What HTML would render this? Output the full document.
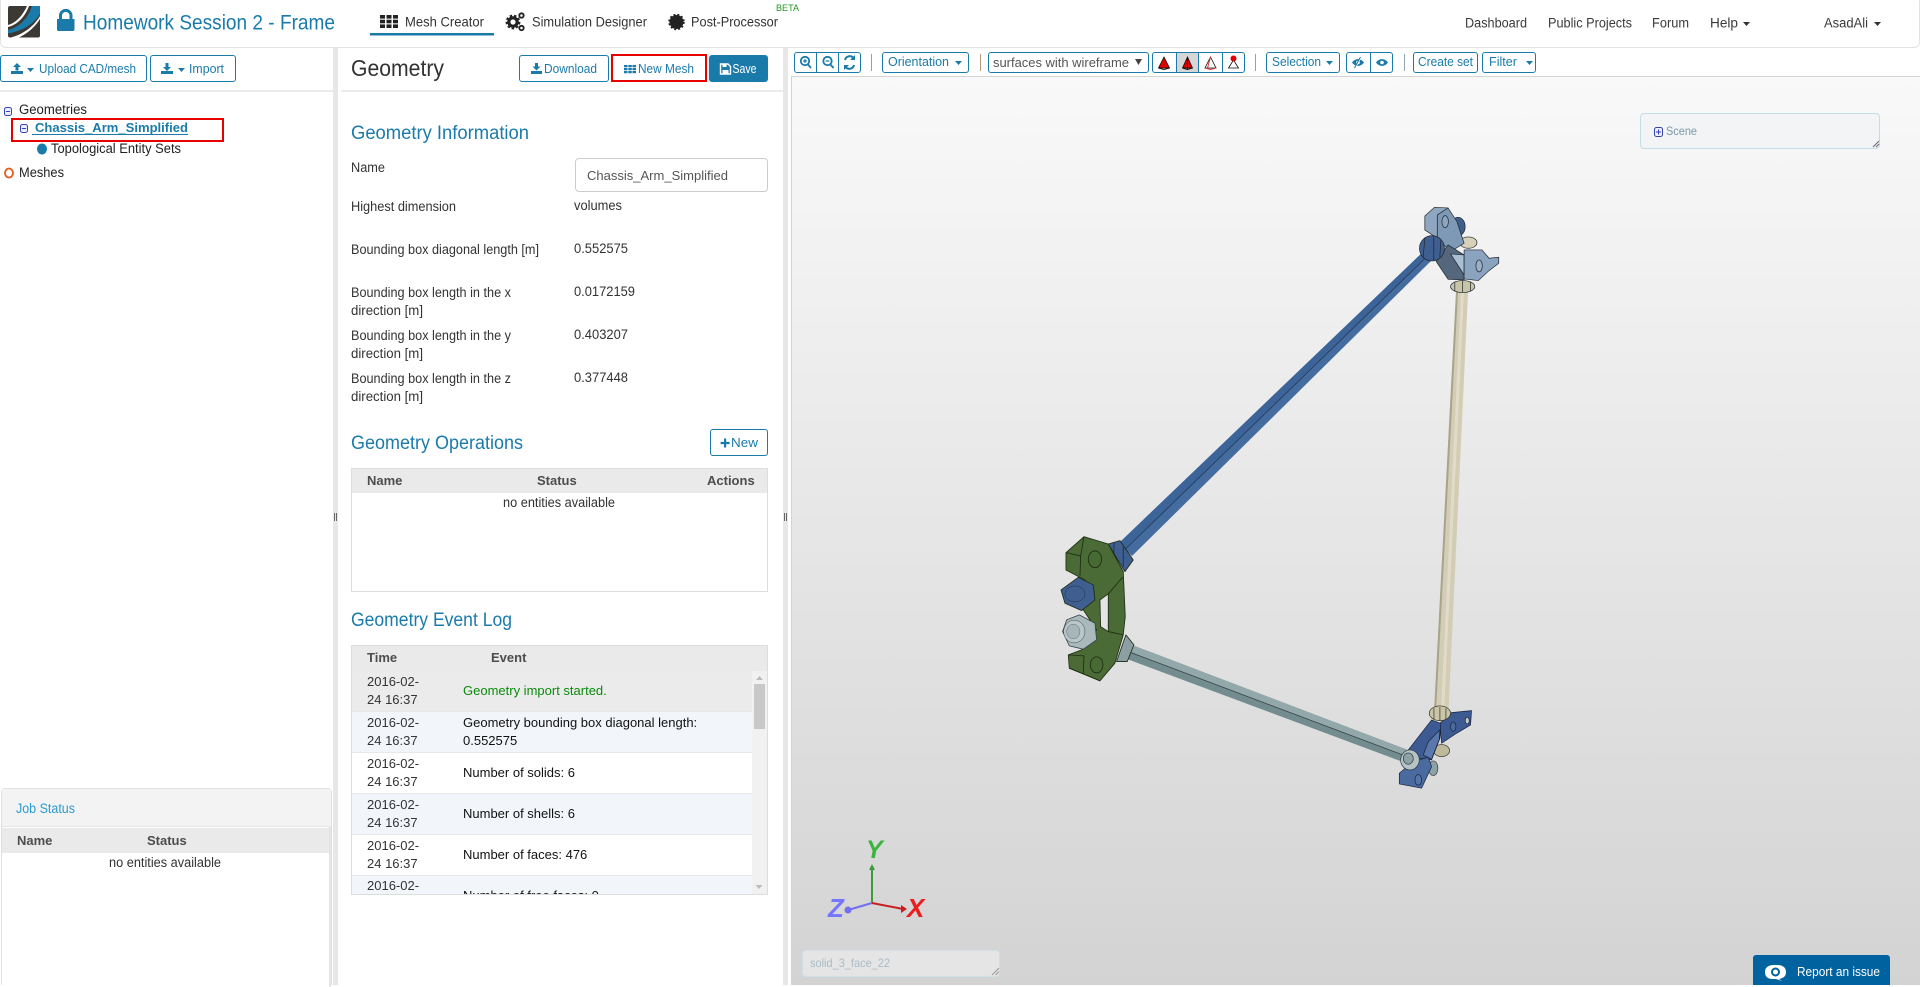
<!DOCTYPE html>
<html><head><meta charset="utf-8"><title>Homework Session 2 - Frame</title>
<style>
html,body{margin:0;padding:0;width:1920px;height:985px;overflow:hidden;background:#fff;font-family:"Liberation Sans",sans-serif}
.a{position:absolute;box-sizing:border-box}
.btn{position:absolute;box-sizing:border-box;border:1px solid #1a7bab;border-radius:3px;background:#fff}
.th{position:absolute;font-size:13px;font-weight:bold;color:#4d4d4d;line-height:18px;white-space:nowrap}
.row{position:absolute;left:0;width:401px;box-sizing:border-box;border-bottom:1px solid #e8e8e8}
.d{position:absolute;left:15px;font-size:13px;line-height:18px;color:#333;white-space:nowrap}
.e{position:absolute;left:111px;font-size:13px;line-height:18px;color:#111;white-space:nowrap}
svg text{font-family:"Liberation Sans",sans-serif}
</style></head><body>

<!-- header -->
<div class="a" style="left:0;top:-4px;width:1920px;height:52px;border:1px solid #e2e2e2;border-radius:6px;background:#fff"></div>
<!-- gutters -->
<div class="a" style="left:333px;top:48px;width:5px;height:937px;background:#e7e7e7"></div>
<div class="a" style="left:783px;top:48px;width:5px;height:937px;background:#e7e7e7"></div>
<div class="a" style="left:0;top:90px;width:333px;height:2px;background:#ececec"></div>
<div class="a" style="left:341px;top:90px;width:442px;height:2px;background:#ececec"></div>

<!-- viewer -->
<div class="a" style="left:791px;top:76px;width:1129px;height:909px;border-top:1px solid #d4d4d4;border-left:1px solid #d4d4d4;background:linear-gradient(#f9f9f9,#d3d3d3)"></div>
<div class="a" style="left:1640px;top:113px;width:240px;height:36px;border:1px solid #c3dde8;border-radius:4px;background:rgba(240,243,244,.75)"></div>
<div class="a" style="left:802px;top:950px;width:198px;height:27px;border:1px solid #cfdfe6;border-radius:4px;background:rgba(232,232,232,.8)"></div>
<div class="a" style="left:1753px;top:955px;width:137px;height:30px;background:#00629f;border-radius:3px 3px 0 0"></div>

<!-- left panel buttons -->
<div class="btn" style="left:0;top:55px;width:147px;height:27px"></div>
<div class="btn" style="left:150px;top:55px;width:86px;height:27px"></div>
<!-- middle panel buttons -->
<div class="btn" style="left:519px;top:55px;width:90px;height:27px"></div>
<div class="btn" style="left:611px;top:54px;width:96px;height:28px;border:2px solid #e60000;border-radius:0"></div>
<div class="a" style="left:709px;top:55px;width:59px;height:27px;background:#1a7bab;border-radius:3px"></div>
<div class="btn" style="left:710px;top:429px;width:58px;height:27px"></div>
<!-- red box tree -->
<div class="a" style="left:11px;top:118px;width:213px;height:24px;border:2px solid #e60000"></div>
<!-- input -->
<div class="a" style="left:575px;top:158px;width:193px;height:34px;border:1px solid #ccc;border-radius:4px;background:#fff"></div>

<!-- operations table -->
<div class="a" style="left:351px;top:468px;width:417px;height:124px;border:1px solid #ddd;background:#fff">
  <div class="a" style="left:0;top:0;width:415px;height:24px;background:#eaeaea"></div>
  <div class="th" style="left:15px;top:3px">Name</div>
  <div class="th" style="left:185px;top:3px">Status</div>
  <div class="th" style="left:355px;top:3px">Actions</div>
</div>

<!-- event log table -->
<div class="a" style="left:351px;top:645px;width:417px;height:250px;border:1px solid #ddd;background:#fff;overflow:hidden">
  <div class="a" style="left:0;top:0;width:415px;height:25px;background:#eaeaea"></div>
  <div class="th" style="left:15px;top:3px">Time</div>
  <div class="th" style="left:139px;top:3px">Event</div>
  <div class="row" style="top:25px;height:41px;background:#ebebeb"><div class="d" style="top:2px">2016-02-<br>24 16:37</div><div class="e" style="top:11px;color:#0a8a0a">Geometry import started.</div></div>
  <div class="row" style="top:66px;height:41px;background:#f2f6fb"><div class="d" style="top:2px">2016-02-<br>24 16:37</div><div class="e" style="top:2px">Geometry bounding box diagonal length:<br>0.552575</div></div>
  <div class="row" style="top:107px;height:41px;background:#fff"><div class="d" style="top:2px">2016-02-<br>24 16:37</div><div class="e" style="top:11px">Number of solids: 6</div></div>
  <div class="row" style="top:148px;height:41px;background:#f2f6fb"><div class="d" style="top:2px">2016-02-<br>24 16:37</div><div class="e" style="top:11px">Number of shells: 6</div></div>
  <div class="row" style="top:189px;height:41px;background:#fff"><div class="d" style="top:2px">2016-02-<br>24 16:37</div><div class="e" style="top:11px">Number of faces: 476</div></div>
  <div class="row" style="top:230px;height:41px;background:#f2f6fb"><div class="d" style="top:1px">2016-02-<br>24 16:37</div><div class="e" style="top:11px">Number of free faces: 0</div></div>
  <div class="a" style="left:400px;top:25px;width:15px;height:225px;background:#f1f1f1"></div>
  <div class="a" style="left:402px;top:38px;width:11px;height:45px;background:#c8c8c8"></div>
</div>

<!-- job status -->
<div class="a" style="left:1px;top:788px;width:331px;height:197px;border:1px solid #e0e0e0;border-bottom:0;border-radius:4px 4px 0 0;background:#fff">
  <div class="a" style="left:0;top:0;width:329px;height:38px;background:#f3f3f3;border-bottom:1px solid #e4e4e4"></div>
  <div class="a" style="left:0;top:39px;width:328px;height:25px;background:#eaeaea"></div>
  <div class="th" style="left:15px;top:43px">Name</div>
  <div class="th" style="left:145px;top:43px">Status</div>
  <div class="a" style="left:327px;top:38px;width:2px;height:160px;background:#e4e4e4"></div>
</div>

<!-- toolbar boxes -->
<div class="btn" style="left:794px;top:52px;width:67px;height:21px"></div>
<div class="a" style="left:816px;top:52px;width:1px;height:21px;background:#1a7bab"></div>
<div class="a" style="left:838px;top:52px;width:1px;height:21px;background:#1a7bab"></div>
<div class="btn" style="left:882px;top:52px;width:87px;height:21px"></div>
<div class="btn" style="left:988px;top:52px;width:161px;height:21px"></div>
<div class="btn" style="left:1152px;top:52px;width:93px;height:21px"></div>
<div class="a" style="left:1176px;top:53px;width:23px;height:19px;background:#d6d6d6;border-left:1px solid #1a7bab;border-right:1px solid #1a7bab"></div>
<div class="a" style="left:1222px;top:52px;width:1px;height:21px;background:#1a7bab"></div>
<div class="btn" style="left:1266px;top:52px;width:74px;height:21px"></div>
<div class="btn" style="left:1346px;top:52px;width:47px;height:21px"></div>
<div class="a" style="left:1370px;top:52px;width:1px;height:21px;background:#1a7bab"></div>
<div class="btn" style="left:1413px;top:52px;width:65px;height:21px"></div>
<div class="btn" style="left:1482px;top:52px;width:54px;height:21px"></div>
<div class="a" style="left:871px;top:54px;width:1px;height:17px;background:#b89a78"></div>
<div class="a" style="left:980px;top:54px;width:1px;height:17px;background:#b89a78"></div>
<div class="a" style="left:1255px;top:54px;width:1px;height:17px;background:#b89a78"></div>
<div class="a" style="left:1404px;top:54px;width:1px;height:17px;background:#8fa5b5"></div>

<svg class="a" style="left:0;top:0" width="1920" height="985" viewBox="0 0 1920 985" xmlns="http://www.w3.org/2000/svg">
<!-- logo -->
<rect x="8" y="6" width="32" height="31.500" rx="2" fill="#3c3935"/>
<path d="M8 30 C20 27 28 18 32 6 L40 6 L40 14 C34 24 22 31 8 33.500Z" fill="#1a7bab"/>
<path d="M8 25 C16 23 23 15 27 6 L29 6 C25 17 17 25 8 27Z" fill="#fff"/>
<path d="M11 37.500 C24 34 34 26 40 16 L40 19 C35 27 28 33 19 37.500Z" fill="#fff"/>
<!-- lock -->
<path d="M57 19h17.500v10.500a1.500 1.500 0 0 1-1.500 1.500H58.500a1.500 1.500 0 0 1-1.500-1.500Z" fill="#1a7bab"/>
<path d="M60.500 19v-4a5.300 5.300 0 0 1 10.500 0v4" fill="none" stroke="#1a7bab" stroke-width="3"/>
<!-- mesh icon -->
<g fill="#222"><rect x="380" y="15" width="5" height="3.600"/><rect x="386.500" y="15" width="5" height="3.600"/><rect x="393" y="15" width="5" height="3.600"/><rect x="380" y="19.700" width="5" height="3.600"/><rect x="386.500" y="19.700" width="5" height="3.600"/><rect x="393" y="19.700" width="5" height="3.600"/><rect x="380" y="24.400" width="5" height="3.600"/><rect x="386.500" y="24.400" width="5" height="3.600"/><rect x="393" y="24.400" width="5" height="3.600"/></g>
<rect x="370" y="33" width="124" height="2.500" fill="#1a7bab"/>
<!-- sim gears -->
<circle cx="513" cy="22" r="4.200" fill="none" stroke="#222" stroke-width="3.200"/><circle cx="513" cy="22" r="6.500" fill="none" stroke="#222" stroke-width="1.800" stroke-dasharray="2.500 2"/>
<circle cx="521.500" cy="15.500" r="2.200" fill="none" stroke="#222" stroke-width="1.800"/><circle cx="521.500" cy="28" r="2.200" fill="none" stroke="#222" stroke-width="1.800"/>
<!-- post icon -->
<circle cx="676.500" cy="22" r="7" fill="#222"/><circle cx="676.500" cy="22" r="7.500" fill="none" stroke="#222" stroke-width="1.500" stroke-dasharray="2 2"/>

<!-- header text -->
<text x="83" y="29.500" font-size="21" fill="#1a7bab" textLength="252" lengthAdjust="spacingAndGlyphs">Homework Session 2 - Frame</text>
<g font-size="14" fill="#333">
<text x="405" y="26.500" textLength="79" lengthAdjust="spacingAndGlyphs">Mesh Creator</text>
<text x="532" y="26.500" textLength="115" lengthAdjust="spacingAndGlyphs">Simulation Designer</text>
<text x="691" y="26.500" textLength="87" lengthAdjust="spacingAndGlyphs">Post-Processor</text>
</g>
<text x="776" y="11" font-size="9" fill="#1f9a1f" textLength="23" lengthAdjust="spacingAndGlyphs">BETA</text>
<g font-size="13.500" fill="#3a3a3a">
<text x="1465" y="27.500" textLength="62" lengthAdjust="spacingAndGlyphs">Dashboard</text>
<text x="1548" y="27.500" textLength="84" lengthAdjust="spacingAndGlyphs">Public Projects</text>
<text x="1652" y="27.500" textLength="37" lengthAdjust="spacingAndGlyphs">Forum</text>
<text x="1710" y="27.500" textLength="28" lengthAdjust="spacingAndGlyphs">Help</text>
<text x="1824" y="27.500" textLength="44" lengthAdjust="spacingAndGlyphs">AsadAli</text>
</g>
<path d="M1743 22h7l-3.500 4zM1874 22h7l-3.500 4z" fill="#333"/>

<!-- left buttons -->
<g fill="#1a7bab">
<path d="M17 63l4 4h-2.500v3.500h-3V67H13zM11 71h12v3H11z"/><path d="M27 68h7l-3.500 4z"/>
<path d="M165.500 63h3v4h2.500l-4 4-4-4h2.500zM161 71h12v3h-12z"/><path d="M178 68h7l-3.500 4z"/>
<path d="M535 63h3v3.500h2.500l-4 4-4-4h2.500zM531 71h11v3h-11z"/>
<path d="M624 65h3.500v2.300H624zM628.300 65h3.500v2.300h-3.500zM632.500 65h3.500v2.300h-3.500zM624 68h3.500v2.300H624zM628.300 68h3.500v2.300h-3.500zM632.500 68h3.500v2.300h-3.500zM624 71h3.500v2.300H624zM628.300 71h3.500v2.300h-3.500zM632.500 71h3.500v2.300h-3.500z"/>
<path d="M724 438.500h2.200v3.400h3.400v2.200h-3.400v3.400H724v-3.400h-3.400v-2.200h3.400z"/>
<text x="39" y="73" font-size="12.500" textLength="97" lengthAdjust="spacingAndGlyphs">Upload CAD/mesh</text>
<text x="189" y="73" font-size="12.500" textLength="35" lengthAdjust="spacingAndGlyphs">Import</text>
<text x="544" y="73" font-size="12.500" textLength="53" lengthAdjust="spacingAndGlyphs">Download</text>
<text x="638" y="73" font-size="12.500" textLength="56" lengthAdjust="spacingAndGlyphs">New Mesh</text>
<text x="731" y="447" font-size="12.500" textLength="27" lengthAdjust="spacingAndGlyphs">New</text>
</g>
<path d="M720.500 64h7.500l2.500 2.500V74h-10z" fill="none" stroke="#fff" stroke-width="1.400"/><rect x="722.500" y="64.500" width="4" height="2.500" fill="#fff"/><rect x="722.500" y="70" width="6" height="3.500" fill="#fff"/>
<text x="732.500" y="73" font-size="12.500" fill="#fff" textLength="24" lengthAdjust="spacingAndGlyphs">Save</text>
<text x="351" y="76" font-size="23" fill="#333" textLength="93" lengthAdjust="spacingAndGlyphs">Geometry</text>

<!-- tree -->
<rect x="4.500" y="107.500" width="7" height="8" rx="2" fill="#eef" stroke="#3344aa"/><path d="M6 111.500h4" stroke="#3344aa"/>
<rect x="20.500" y="124.500" width="7" height="8" rx="2" fill="#eef" stroke="#3344aa"/><path d="M22 128.500h4" stroke="#3344aa"/>
<text x="19" y="114" font-size="13.500" fill="#222" textLength="68" lengthAdjust="spacingAndGlyphs">Geometries</text>
<text x="35" y="132" font-size="13" font-weight="bold" fill="#1a7bab" textLength="153" lengthAdjust="spacingAndGlyphs">Chassis_Arm_Simplified</text>
<rect x="32" y="134" width="156" height="1" fill="#1a7bab"/>
<ellipse cx="42" cy="149" rx="5" ry="5.500" fill="#1a7bab"/>
<text x="51" y="153" font-size="13.500" fill="#222" textLength="130" lengthAdjust="spacingAndGlyphs">Topological Entity Sets</text>
<ellipse cx="9" cy="173" rx="4" ry="4.500" fill="none" stroke="#e25a1c" stroke-width="1.800"/>
<text x="19" y="177" font-size="13.500" fill="#222" textLength="45" lengthAdjust="spacingAndGlyphs">Meshes</text>

<!-- geometry info -->
<g font-size="19" fill="#1a7bab">
<text x="351" y="139" textLength="178" lengthAdjust="spacingAndGlyphs">Geometry Information</text>
<text x="351" y="449" textLength="172" lengthAdjust="spacingAndGlyphs">Geometry Operations</text>
<text x="351" y="626" textLength="161" lengthAdjust="spacingAndGlyphs">Geometry Event Log</text>
</g>
<text x="587" y="180" font-size="13" fill="#555" textLength="141" lengthAdjust="spacingAndGlyphs">Chassis_Arm_Simplified</text>
<g font-size="13.500" fill="#333">
<text x="351" y="172" textLength="34" lengthAdjust="spacingAndGlyphs">Name</text>
<text x="351" y="211" textLength="105" lengthAdjust="spacingAndGlyphs">Highest dimension</text>
<text x="351" y="254" textLength="188" lengthAdjust="spacingAndGlyphs">Bounding box diagonal length [m]</text>
<text x="351" y="297" textLength="160" lengthAdjust="spacingAndGlyphs">Bounding box length in the x</text>
<text x="351" y="315" textLength="72" lengthAdjust="spacingAndGlyphs">direction [m]</text>
<text x="351" y="340" textLength="160" lengthAdjust="spacingAndGlyphs">Bounding box length in the y</text>
<text x="351" y="358" textLength="72" lengthAdjust="spacingAndGlyphs">direction [m]</text>
<text x="351" y="383" textLength="160" lengthAdjust="spacingAndGlyphs">Bounding box length in the z</text>
<text x="351" y="401" textLength="72" lengthAdjust="spacingAndGlyphs">direction [m]</text>
<text x="574" y="210" textLength="48" lengthAdjust="spacingAndGlyphs">volumes</text>
<text x="574" y="253" textLength="54" lengthAdjust="spacingAndGlyphs">0.552575</text>
<text x="574" y="296" textLength="61" lengthAdjust="spacingAndGlyphs">0.0172159</text>
<text x="574" y="339" textLength="54" lengthAdjust="spacingAndGlyphs">0.403207</text>
<text x="574" y="382" textLength="54" lengthAdjust="spacingAndGlyphs">0.377448</text>
<text x="503" y="507" textLength="112" lengthAdjust="spacingAndGlyphs">no entities available</text>
<text x="109" y="867" textLength="112" lengthAdjust="spacingAndGlyphs">no entities available</text>
</g>
<text x="16" y="813" font-size="13.500" fill="#2b9bcf" textLength="59" lengthAdjust="spacingAndGlyphs">Job Status</text>
<!-- scrollbar arrows -->
<path d="M756 680l3.500-4 3.500 4zM755.500 885h7l-3.500 4z" fill="#bbb"/>

<!-- gutter grips -->
<g fill="#666"><rect x="334" y="513" width="1" height="8"/><rect x="336" y="513" width="1" height="8"/><rect x="784" y="513" width="1" height="8"/><rect x="786" y="513" width="1" height="8"/></g>

<!-- toolbar icons -->
<g fill="none" stroke="#1a7bab" stroke-width="1.800">
<circle cx="805" cy="61" r="4.200"/><path d="M808 64.500l3 3.500"/><path d="M803 61h4M805 59v4" stroke-width="1.200"/>
<circle cx="827.500" cy="61" r="4.200"/><path d="M830.500 64.500l3 3.500"/><path d="M825.500 61h4" stroke-width="1.200"/>
<path d="M845 60a4.800 4.800 0 0 1 8-2.500M854 65a4.800 4.800 0 0 1-8 2.500" stroke-width="2"/>
</g>
<path d="M855 55v5h-5zM844 70v-5h5z" fill="#1a7bab"/>
<g font-size="12.500" fill="#1a7bab">
<text x="888" y="66" textLength="61" lengthAdjust="spacingAndGlyphs">Orientation</text>
<text x="1272" y="66" textLength="49" lengthAdjust="spacingAndGlyphs">Selection</text>
<text x="1418" y="66" textLength="55" lengthAdjust="spacingAndGlyphs">Create set</text>
<text x="1489" y="66" textLength="28" lengthAdjust="spacingAndGlyphs">Filter</text>
</g>
<path d="M955 61h7l-3.500 4zM1326 61h7l-3.500 4zM1526 61h7l-3.500 4z" fill="#1a7bab"/>
<text x="993" y="67" font-size="13" fill="#555" textLength="136" lengthAdjust="spacingAndGlyphs">surfaces with wireframe</text>
<path d="M1135 59h7l-3.500 6z" fill="#444"/>
<!-- render-mode cones -->
<path d="M1164 57l5.500 11h-11z" fill="#e00000" stroke="#111" stroke-width=".8"/><path d="M1158.500 68l5.500 1.500 5.500-1.500" fill="none" stroke="#111"/>
<path d="M1187.500 57l5 11h-10z" fill="#d80000" stroke="#111" stroke-width=".8"/><path d="M1187.500 57v12.500M1182.500 68l5 1.500 5-1.500" fill="none" stroke="#111"/>
<path d="M1210.500 57l5.500 11h-11z" fill="#fff" stroke="#111" stroke-width=".8"/><path d="M1210.500 57l-3 11" stroke="#d33" fill="none"/><path d="M1205 68l5.500 1.500 5.500-1.500" fill="none" stroke="#d33"/>
<path d="M1233.500 60l5 8h-10z" fill="#fff" stroke="#111" stroke-width=".8"/><circle cx="1233.500" cy="58.500" r="3" fill="#e00000"/>
<!-- eye icons -->
<path d="M1352 62.500c3-4.500 9-4.500 12 0-3 4.500-9 4.500-12 0z" fill="#1a7bab"/><circle cx="1358" cy="62.500" r="1.800" fill="#fff"/><path d="M1355 68l6-11" stroke="#fff" stroke-width="1.500"/><path d="M1354.500 68l6-11" stroke="#1a7bab" stroke-width="1"/>
<path d="M1376 62.500c3-4.500 9-4.500 12 0-3 4.500-9 4.500-12 0z" fill="#1a7bab"/><circle cx="1382" cy="62.500" r="1.800" fill="#fff"/>
<!-- scene box -->
<rect x="1654.500" y="127.500" width="8" height="9" rx="2" fill="#eef" stroke="#3344aa"/><path d="M1656 132h5M1658.500 129.500v5" stroke="#3344aa"/>
<text x="1666" y="135" font-size="11.500" fill="#7a99aa" textLength="31" lengthAdjust="spacingAndGlyphs">Scene</text>
<path d="M1873 147l6-6M1876 147l3-3" stroke="#667" fill="none"/>
<text x="810" y="967" font-size="12" fill="#a9bcc7" textLength="80" lengthAdjust="spacingAndGlyphs">solid_3_face_22</text>
<path d="M992 975l7-7M995.500 975l3.500-3.500" stroke="#999" fill="none"/>
<!-- report -->
<path d="M1765 972c0-5 4-7 9-7h3c5 0 9 2 9 7s-3 6-7 7l3 2-6-2h-3c-5 0-8-2-8-7z" fill="#fff"/><circle cx="1775.500" cy="972" r="3.500" fill="none" stroke="#00629f" stroke-width="2"/>
<text x="1797" y="976" font-size="13" fill="#fff" textLength="83" lengthAdjust="spacingAndGlyphs">Report an issue</text>

<!-- axes -->
<path d="M872 903V870" stroke="#3a9d3a" stroke-width="2"/><path d="M872 864l-3 6h6z" fill="#3a9d3a"/>
<path d="M872 903L848 910" stroke="#7070f0" stroke-width="2"/><circle cx="848" cy="910" r="3.500" fill="#7070f0"/>
<path d="M872 903L903 909" stroke="#c81e1e" stroke-width="2"/><path d="M907 909l-6-4v8z" fill="#c81e1e"/>
<text x="866" y="858" font-size="25" font-weight="bold" font-style="italic" fill="#3db53d">Y</text>
<text x="828" y="917" font-size="26" font-weight="bold" font-style="italic" fill="#7575ff">Z</text>
<text x="907" y="917" font-size="26" font-weight="bold" font-style="italic" fill="#ee1c1c">X</text>

<!-- MODEL: rods -->
<path d="M1424 251L1432 260L1132 556L1119 543Z" fill="#456c9f"/>
<path d="M1424 251L1428 255.500L1125 549.500L1119 543Z" fill="#3d6498"/>
<path d="M1428 255.500L1125 549.500" stroke="#22395c" stroke-width=".8"/>
<path d="M1456 292H1468L1448.500 712H1434Z" fill="#d2cdb4"/>
<path d="M1456 292H1458L1436 712H1434Z" fill="#a8a48c"/>
<path d="M1461 292H1464L1444 712H1441Z" fill="#e0dcc9"/>
<path d="M1132 645L1408 750L1403 762L1127 659Z" fill="#738c90"/>
<path d="M1132 645L1408 750L1405.500 756L1129.500 652Z" fill="#92a8ab"/>
<path d="M1129.500 652L1405.500 756" stroke="#2b3a3d" stroke-width=".7"/>

<!-- top bracket -->
<g transform="translate(1000 180) scale(.357 .333)" stroke="#20282f" stroke-width="2" stroke-linejoin="round">
<ellipse cx="1283" cy="140" rx="20" ry="28" fill="#3f5f8c"/>
<ellipse cx="1312" cy="188" rx="24" ry="17" fill="#d6d1b8"/>
<path d="M1190 108L1217 82L1255 84L1225 105L1225 175L1190 150Z" fill="#8ea6c0"/>
<path d="M1255 84L1225 105L1225 175L1262 215L1300 190L1280 125Z" fill="#7e99b5"/>
<ellipse cx="1247" cy="125" rx="9" ry="18" fill="#8ea6c0"/>
<path d="M1222 245L1255 195L1300 225L1300 300L1255 298Z" fill="#54677c"/>
<path d="M1262 222L1300 225L1300 285Z" fill="#aabfd4"/>
<path d="M1300 210L1350 210L1370 235L1397 232L1397 250L1370 272L1340 302L1300 297Z" fill="#8aa3bf"/>
<ellipse cx="1342" cy="258" rx="9" ry="18" fill="#9ab0c8"/>
<ellipse cx="1296" cy="320" rx="34" ry="18" fill="#c9c5a8"/>
<path d="M1274 307V335M1296 303V338M1318 306V335" fill="none"/>
<ellipse cx="1210" cy="205" rx="35" ry="38" fill="#3e5f90"/>
<path d="M1190 175L1185 235M1215 170L1215 240M1235 180L1232 232" fill="none"/>
</g>

<!-- left green bracket -->
<g transform="translate(1040 520) scale(.333)" stroke="#1d2a14" stroke-width="2.500" stroke-linejoin="round">
<path d="M205 72L240 62L280 120L255 155Z" fill="#3f5f90"/>
<path d="M222 68V130M250 80V140" stroke="#1c2c44" fill="none"/>
<path d="M78 98L132 50L205 72L250 155L256 290L250 345L225 430L180 483L88 445L85 405L130 388L170 330L130 270L135 180L78 150Z" fill="#4a6b35"/>
<path d="M78 98L122 108L132 50M122 108L120 168M88 445L130 462L180 483M130 462L132 408L85 405" fill="none"/>
<path d="M180 240L205 222L205 335L182 320Z" fill="#e4e4e4"/>
<path d="M205 222L248 172M205 335L250 345" fill="none"/>
<ellipse cx="165" cy="118" rx="20" ry="25" fill="#466a32"/>
<ellipse cx="170" cy="435" rx="19" ry="24" fill="#466a32"/>
<path d="M115 172L160 195L165 240L125 272L75 250L63 210Z" fill="#3f5f91"/>
<ellipse cx="105" cy="222" rx="30" ry="24" fill="#3f5f91" stroke="#1c2c44" stroke-width="1.500"/>
<path d="M258 345L282 375L262 425L230 425Z" fill="#8ca0a4"/>
<path d="M118 285L165 310L170 360L130 388L88 378L68 335L80 300Z" fill="#a9b9bc" stroke="#3a4648"/>
<ellipse cx="103" cy="335" rx="32" ry="34" fill="#b9c7c9" stroke="#3a4648" stroke-width="1.500"/>
<ellipse cx="100" cy="335" rx="20" ry="22" fill="#a6b6b9" stroke="#3a4648" stroke-width="1"/>
</g>

<!-- bottom bracket -->
<g transform="translate(1360 680) scale(.333)" stroke="#15203a" stroke-width="2" stroke-linejoin="round">
<path d="M240 130L275 98L335 92L332 135L290 160L245 190Z" fill="#3e5a92"/>
<ellipse cx="280" cy="140" rx="8" ry="14" fill="#4a6aa0"/>
<ellipse cx="322" cy="122" rx="6" ry="10" fill="#c9c9c9"/>
<ellipse cx="245" cy="212" rx="24" ry="18" fill="#bdb99a" stroke="#2c2a1c"/>
<path d="M215 120L242 130L240 175L215 240L175 235L145 210Z" fill="#3d5b92"/>
<path d="M205 185L240 150L238 178L215 238L190 225Z" fill="#5a78ab"/>
<ellipse cx="240" cy="100" rx="32" ry="22" fill="#c9c5a8" stroke="#2c2a1c"/>
<path d="M222 85V118M240 82V122M258 85V118" fill="none" stroke="#2c2a1c"/>
<ellipse cx="220" cy="265" rx="14" ry="22" fill="#8ea2a6" stroke="#2b3a3d"/>
<path d="M118 280L160 245L205 232L215 260L185 325L118 312Z" fill="#4a6aa0"/>
<ellipse cx="175" cy="300" rx="10" ry="16" fill="#5574a8"/>
<ellipse cx="150" cy="240" rx="28" ry="30" fill="#b5c3c4" stroke="#2b3a3d"/>
<ellipse cx="145" cy="236" rx="15" ry="17" fill="#8ea2a6" stroke="#2b3a3d"/>
</g>
</svg>
</body></html>
